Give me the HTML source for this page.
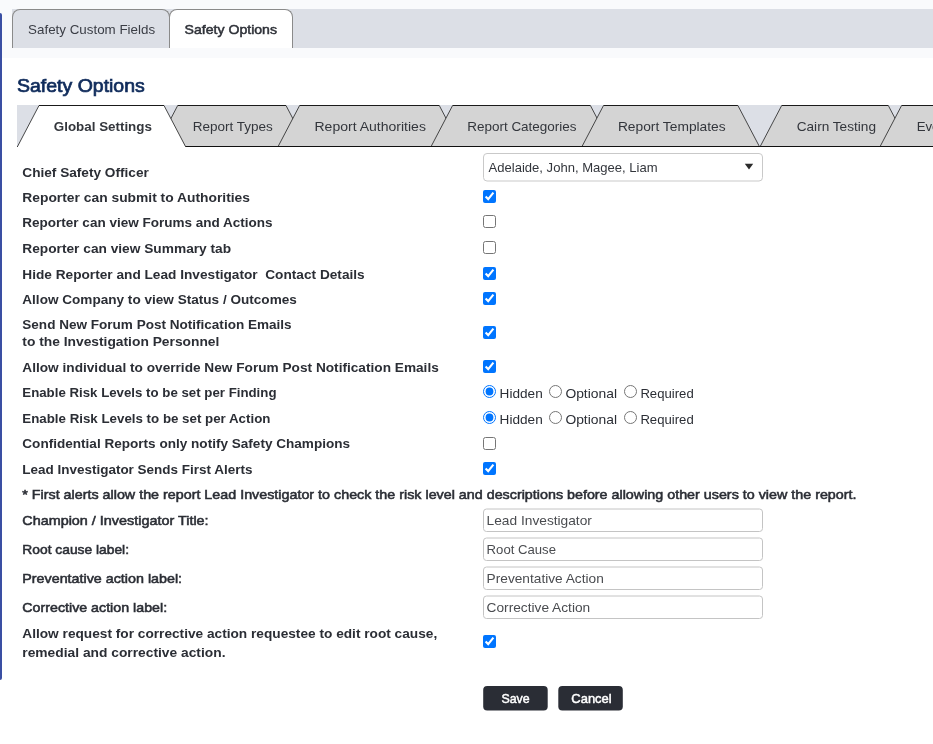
<!DOCTYPE html>
<html><head><meta charset="utf-8">
<style>
html,body{margin:0;padding:0;}
body{width:933px;height:744px;overflow:hidden;position:relative;background:#fff;font-family:"Liberation Sans",sans-serif;}
svg text{font-family:"Liberation Sans",sans-serif;white-space:pre;}
#topbg{position:absolute;left:0;top:0;width:933px;height:58px;background:#f9fafc;}
#bluebar{position:absolute;left:0;top:13px;width:2px;height:667px;background:#3a4fa3;border-radius:0 2px 2px 0;}
#tabbar{position:absolute;left:12px;top:9px;width:921px;height:39px;background:#dcdfe6;}
.ttab{position:absolute;top:9px;height:39px;border:1px solid #8a8a8a;border-bottom:none;border-radius:8px 8px 0 0;box-sizing:border-box;}
.cb{position:absolute;left:483px;width:13px;height:13px;margin:0;}
</style></head><body>
<div id="topbg"></div>
<div id="bluebar"></div>
<div id="tabbar"></div>
<div class="ttab" style="left:12px;width:158px;background:#dcdfe6;"></div>
<div class="ttab" style="left:169px;width:124px;background:#fff;"></div>
<svg style="position:absolute;left:0;top:0;will-change:transform;" width="933" height="744">
<text x="28.1" y="33.8" font-size="13.1" font-weight="normal" fill="#3a3d45" textLength="127.0" lengthAdjust="spacingAndGlyphs">Safety Custom Fields</text>
<text x="184.6" y="33.8" font-size="13.1" font-weight="normal" fill="#2e3138" textLength="92.4" lengthAdjust="spacingAndGlyphs" stroke="#2e3138" stroke-width="0.5">Safety Options</text>
<text x="17" y="91.5" font-size="17.9" font-weight="normal" fill="#0f2b5b" textLength="127.8" lengthAdjust="spacingAndGlyphs" stroke="#0f2b5b" stroke-width="0.7">Safety Options</text>
<rect x="17" y="105" width="916" height="42" fill="#dcdfe6"/>
<polygon points="156.2,147.0 177.7,105.5 286,105.5 307.5,147.0" fill="#d4d4d4"/>
<line x1="177.7" y1="105.5" x2="286" y2="105.5" stroke="#1a1a1a" stroke-width="1.1"/>
<polyline points="156.2,146.5 177.7,105.5" fill="none" stroke="#2a2a2a" stroke-width="0.85"/>
<polyline points="286,105.5 307.5,146.5" fill="none" stroke="#2a2a2a" stroke-width="0.85"/>
<text x="192.7" y="131" font-size="13.2" font-weight="normal" fill="#33363c" textLength="80.1" lengthAdjust="spacingAndGlyphs">Report Types</text>
<polygon points="278.1,147.0 299.6,105.5 439.3,105.5 460.8,147.0" fill="#d4d4d4"/>
<line x1="299.6" y1="105.5" x2="439.3" y2="105.5" stroke="#1a1a1a" stroke-width="1.1"/>
<polyline points="278.1,146.5 299.6,105.5" fill="none" stroke="#2a2a2a" stroke-width="0.85"/>
<polyline points="439.3,105.5 460.8,146.5" fill="none" stroke="#2a2a2a" stroke-width="0.85"/>
<text x="314.5" y="131" font-size="13.2" font-weight="normal" fill="#33363c" textLength="111.4" lengthAdjust="spacingAndGlyphs">Report Authorities</text>
<polygon points="431.1,147.0 452.6,105.5 590.4,105.5 611.9,147.0" fill="#d4d4d4"/>
<line x1="452.6" y1="105.5" x2="590.4" y2="105.5" stroke="#1a1a1a" stroke-width="1.1"/>
<polyline points="431.1,146.5 452.6,105.5" fill="none" stroke="#2a2a2a" stroke-width="0.85"/>
<polyline points="590.4,105.5 611.9,146.5" fill="none" stroke="#2a2a2a" stroke-width="0.85"/>
<text x="467.2" y="131" font-size="13.2" font-weight="normal" fill="#33363c" textLength="109.4" lengthAdjust="spacingAndGlyphs">Report Categories</text>
<polygon points="582.0,147.0 603.5,105.5 737.9,105.5 759.4,147.0" fill="#d4d4d4"/>
<line x1="603.5" y1="105.5" x2="737.9" y2="105.5" stroke="#1a1a1a" stroke-width="1.1"/>
<polyline points="582.0,146.5 603.5,105.5" fill="none" stroke="#2a2a2a" stroke-width="0.85"/>
<polyline points="737.9,105.5 759.4,146.5" fill="none" stroke="#2a2a2a" stroke-width="0.85"/>
<text x="617.9" y="131" font-size="13.2" font-weight="normal" fill="#33363c" textLength="107.8" lengthAdjust="spacingAndGlyphs">Report Templates</text>
<polygon points="760.2,147.0 781.7,105.5 888.3,105.5 909.8,147.0" fill="#d4d4d4"/>
<line x1="781.7" y1="105.5" x2="888.3" y2="105.5" stroke="#1a1a1a" stroke-width="1.1"/>
<polyline points="760.2,146.5 781.7,105.5" fill="none" stroke="#2a2a2a" stroke-width="0.85"/>
<polyline points="888.3,105.5 909.8,146.5" fill="none" stroke="#2a2a2a" stroke-width="0.85"/>
<text x="796.7" y="131" font-size="13.2" font-weight="normal" fill="#33363c" textLength="79.3" lengthAdjust="spacingAndGlyphs">Cairn Testing</text>
<polygon points="880.1,147.0 901.6,105.5 1010,105.5 1031.5,147.0" fill="#d4d4d4"/>
<line x1="901.6" y1="105.5" x2="1010" y2="105.5" stroke="#1a1a1a" stroke-width="1.1"/>
<polyline points="880.1,146.5 901.6,105.5" fill="none" stroke="#2a2a2a" stroke-width="0.85"/>
<polyline points="1010,105.5 1031.5,146.5" fill="none" stroke="#2a2a2a" stroke-width="0.85"/>
<text x="916.7" y="131" font-size="13.2" font-weight="normal" fill="#33363c">Events</text>
<line x1="17" y1="146.5" x2="933" y2="146.5" stroke="#111" stroke-width="1.1"/>
<polygon points="17.5,147.0 39,105.5 164,105.5 185.5,147.0" fill="#fff"/>
<line x1="39" y1="105.5" x2="164" y2="105.5" stroke="#1a1a1a" stroke-width="1.1"/>
<polyline points="17.5,146.5 39,105.5" fill="none" stroke="#2a2a2a" stroke-width="0.85"/>
<polyline points="164,105.5 185.5,146.5" fill="none" stroke="#2a2a2a" stroke-width="0.85"/>
<text x="53.8" y="131" font-size="13.2" font-weight="bold" fill="#33363c" textLength="98.1" lengthAdjust="spacingAndGlyphs">Global Settings</text>
<text x="22.3" y="177.1" font-size="13.3" font-weight="bold" fill="#2b2e35" textLength="126.5" lengthAdjust="spacingAndGlyphs">Chief Safety Officer</text>
<text x="22.3" y="201.8" font-size="13.3" font-weight="bold" fill="#2b2e35" textLength="227.7" lengthAdjust="spacingAndGlyphs">Reporter can submit to Authorities</text>
<text x="22.3" y="226.9" font-size="13.3" font-weight="bold" fill="#2b2e35" textLength="250.3" lengthAdjust="spacingAndGlyphs">Reporter can view Forums and Actions</text>
<text x="22.3" y="252.6" font-size="13.3" font-weight="bold" fill="#2b2e35" textLength="208.8" lengthAdjust="spacingAndGlyphs">Reporter can view Summary tab</text>
<text x="22.3" y="278.8" font-size="13.3" font-weight="bold" fill="#2b2e35" textLength="342.4" lengthAdjust="spacingAndGlyphs">Hide Reporter and Lead Investigator  Contact Details</text>
<text x="22.3" y="304" font-size="13.3" font-weight="bold" fill="#2b2e35" textLength="274.5" lengthAdjust="spacingAndGlyphs">Allow Company to view Status / Outcomes</text>
<text x="22.3" y="328.8" font-size="13.3" font-weight="bold" fill="#2b2e35" textLength="269.3" lengthAdjust="spacingAndGlyphs">Send New Forum Post Notification Emails</text>
<text x="22.3" y="346.3" font-size="13.3" font-weight="bold" fill="#2b2e35" textLength="197.1" lengthAdjust="spacingAndGlyphs">to the Investigation Personnel</text>
<text x="22.3" y="371.8" font-size="13.3" font-weight="bold" fill="#2b2e35" textLength="416.5" lengthAdjust="spacingAndGlyphs">Allow individual to override New Forum Post Notification Emails</text>
<text x="22.3" y="396.7" font-size="13.3" font-weight="bold" fill="#2b2e35" textLength="254.2" lengthAdjust="spacingAndGlyphs">Enable Risk Levels to be set per Finding</text>
<text x="22.3" y="422.7" font-size="13.3" font-weight="bold" fill="#2b2e35" textLength="248.1" lengthAdjust="spacingAndGlyphs">Enable Risk Levels to be set per Action</text>
<text x="22.3" y="447.9" font-size="13.3" font-weight="bold" fill="#2b2e35" textLength="327.8" lengthAdjust="spacingAndGlyphs">Confidential Reports only notify Safety Champions</text>
<text x="22.3" y="474" font-size="13.3" font-weight="bold" fill="#2b2e35" textLength="230.1" lengthAdjust="spacingAndGlyphs">Lead Investigator Sends First Alerts</text>
<text x="22.3" y="499.2" font-size="13.3" font-weight="normal" fill="#2b2e35" textLength="834.2" lengthAdjust="spacingAndGlyphs" stroke="#2b2e35" stroke-width="0.55">* First alerts allow the report Lead Investigator to check the risk level and descriptions before allowing other users to view the report.</text>
<text x="22.3" y="525.2" font-size="13.3" font-weight="normal" fill="#2b2e35" textLength="186.3" lengthAdjust="spacingAndGlyphs" stroke="#2b2e35" stroke-width="0.55">Champion / Investigator Title:</text>
<text x="22.3" y="554.3" font-size="13.3" font-weight="normal" fill="#2b2e35" textLength="106.7" lengthAdjust="spacingAndGlyphs" stroke="#2b2e35" stroke-width="0.55">Root cause label:</text>
<text x="22.3" y="583.2" font-size="13.3" font-weight="normal" fill="#2b2e35" textLength="159.8" lengthAdjust="spacingAndGlyphs" stroke="#2b2e35" stroke-width="0.55">Preventative action label:</text>
<text x="22.3" y="612.3" font-size="13.3" font-weight="normal" fill="#2b2e35" textLength="144.8" lengthAdjust="spacingAndGlyphs" stroke="#2b2e35" stroke-width="0.55">Corrective action label:</text>
<text x="22.3" y="638.4" font-size="13.3" font-weight="bold" fill="#2b2e35" textLength="414.9" lengthAdjust="spacingAndGlyphs">Allow request for corrective action requestee to edit root cause,</text>
<text x="22.3" y="656.8" font-size="13.3" font-weight="bold" fill="#2b2e35" textLength="203.2" lengthAdjust="spacingAndGlyphs">remedial and corrective action.</text>
<rect x="483.5" y="153.5" width="279" height="27.5" rx="3.5" fill="#fff" stroke="#c9c9c9" stroke-width="1"/>
<text x="488.6" y="172.1" font-size="13.3" font-weight="normal" fill="#33363c" textLength="169.0" lengthAdjust="spacingAndGlyphs">Adelaide, John, Magee, Liam</text>
<polygon points="744.8,163.8 753.2,163.8 749,169.6" fill="#2b2b2b"/>
<rect x="483.5" y="509.0" width="279" height="22.5" rx="3" fill="#fff" stroke="#c4c4c4" stroke-width="1"/>
<text x="486.6" y="524.8" font-size="13.3" font-weight="normal" fill="#4a4c50" textLength="105.3" lengthAdjust="spacingAndGlyphs">Lead Investigator</text>
<rect x="483.5" y="538.0" width="279" height="22.5" rx="3" fill="#fff" stroke="#c4c4c4" stroke-width="1"/>
<text x="486.6" y="553.8" font-size="13.3" font-weight="normal" fill="#4a4c50" textLength="69.4" lengthAdjust="spacingAndGlyphs">Root Cause</text>
<rect x="483.5" y="567.0" width="279" height="22.5" rx="3" fill="#fff" stroke="#c4c4c4" stroke-width="1"/>
<text x="486.6" y="582.8" font-size="13.3" font-weight="normal" fill="#4a4c50" textLength="117.2" lengthAdjust="spacingAndGlyphs">Preventative Action</text>
<rect x="483.5" y="596.0" width="279" height="22.5" rx="3" fill="#fff" stroke="#c4c4c4" stroke-width="1"/>
<text x="486.6" y="611.8" font-size="13.3" font-weight="normal" fill="#4a4c50" textLength="103.6" lengthAdjust="spacingAndGlyphs">Corrective Action</text>
<rect x="483.2" y="686.1" width="64.5" height="24.5" rx="4" fill="#2a2d35"/>
<rect x="558.3" y="686.1" width="64.5" height="24.5" rx="4" fill="#2a2d35"/>
<text x="501.4" y="702.8" font-size="13.3" font-weight="normal" fill="#fff" textLength="28.2" lengthAdjust="spacingAndGlyphs" stroke="#fff" stroke-width="0.5">Save</text>
<text x="571.3" y="702.8" font-size="13.3" font-weight="normal" fill="#fff" textLength="40.4" lengthAdjust="spacingAndGlyphs" stroke="#fff" stroke-width="0.5">Cancel</text>
<text x="499.6" y="397.8" font-size="13.3" font-weight="normal" fill="#2b2e35" textLength="43.1" lengthAdjust="spacingAndGlyphs">Hidden</text>
<text x="565.4" y="397.8" font-size="13.3" font-weight="normal" fill="#2b2e35" textLength="51.6" lengthAdjust="spacingAndGlyphs">Optional</text>
<text x="640.4" y="397.8" font-size="13.3" font-weight="normal" fill="#2b2e35" textLength="53.3" lengthAdjust="spacingAndGlyphs">Required</text>
<text x="499.6" y="423.6" font-size="13.3" font-weight="normal" fill="#2b2e35" textLength="43.1" lengthAdjust="spacingAndGlyphs">Hidden</text>
<text x="565.4" y="423.6" font-size="13.3" font-weight="normal" fill="#2b2e35" textLength="51.6" lengthAdjust="spacingAndGlyphs">Optional</text>
<text x="640.4" y="423.6" font-size="13.3" font-weight="normal" fill="#2b2e35" textLength="53.3" lengthAdjust="spacingAndGlyphs">Required</text>
</svg>
<input type="checkbox" class="cb" style="top:190px" checked>
<input type="checkbox" class="cb" style="top:215px">
<input type="checkbox" class="cb" style="top:241px">
<input type="checkbox" class="cb" style="top:267px" checked>
<input type="checkbox" class="cb" style="top:292px" checked>
<input type="checkbox" class="cb" style="top:326px" checked>
<input type="checkbox" class="cb" style="top:360px" checked>
<input type="checkbox" class="cb" style="top:436.5px">
<input type="checkbox" class="cb" style="top:462px" checked>
<input type="checkbox" class="cb" style="top:635px" checked>
<input type="radio" name="r385" class="cb" style="top:385px;left:483px" checked>
<input type="radio" name="r385" class="cb" style="top:385px;left:549px">
<input type="radio" name="r385" class="cb" style="top:385px;left:623.7px">
<input type="radio" name="r411" class="cb" style="top:411px;left:483px" checked>
<input type="radio" name="r411" class="cb" style="top:411px;left:549px">
<input type="radio" name="r411" class="cb" style="top:411px;left:623.7px">
</body></html>
